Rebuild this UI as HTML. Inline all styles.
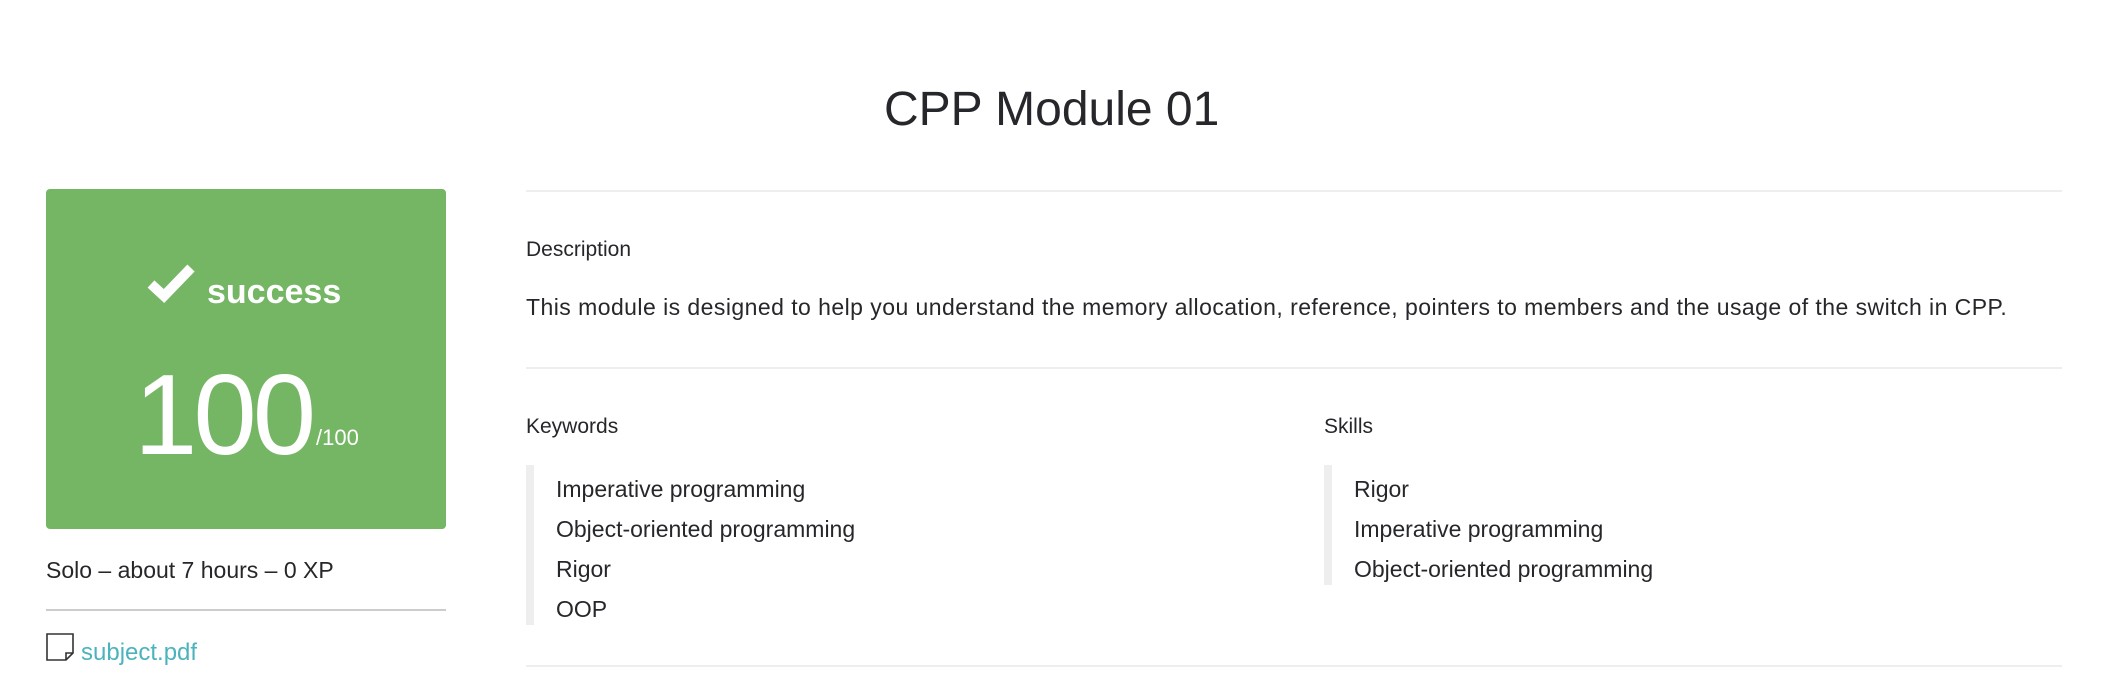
<!DOCTYPE html>
<html><head><meta charset="utf-8"><style>
*{margin:0;padding:0;box-sizing:border-box}
body{width:2106px;height:688px;background:#fff;font-family:"Liberation Sans",sans-serif;color:#26272b;position:relative;overflow:hidden}
.a{position:absolute;white-space:nowrap}
.hr{position:absolute;height:2px;background:#eee;left:526px;width:1536px}
.bar{position:absolute;width:8px;background:#eee}
</style></head><body>
<div class="a" style="left:884px;top:82px;font-size:48px;">CPP Module 01</div>

<div class="a" style="left:46px;top:189px;width:400px;height:340px;background:#75b665;border-radius:4px;"></div>
<svg class="a" style="left:147px;top:262px" width="50" height="42" viewBox="0 0 50 42"><path d="M4 22 L17 34 L44 6" fill="none" stroke="#fff" stroke-width="10"/></svg>
<div class="a" style="left:207px;top:273px;font-size:34px;color:#fff;font-weight:bold">success</div>
<div class="a" style="left:134px;top:350px;font-size:114px;color:#fff;letter-spacing:-4px">100</div>
<div class="a" style="left:316px;top:425px;font-size:22px;color:#fff">/100</div>
<div class="a" style="left:46px;top:557px;font-size:23px">Solo – about 7 hours – 0 XP</div>
<div class="a" style="left:46px;top:609px;width:400px;height:2px;background:#ccc"></div>
<svg class="a" style="left:46px;top:633px" width="30" height="30" viewBox="0 0 30 30"><path d="M1 1 H27 V20 L20 27 H1 Z M20 27 V20 H27" fill="none" stroke="#333" stroke-width="1.6"/></svg>
<div class="a" style="left:81px;top:639px;font-size:24px;color:#4cb3bd">subject.pdf</div>

<div class="hr" style="top:190px"></div>
<div class="a" style="left:526px;top:238px;font-size:21px">Description</div>
<div class="a" style="left:526px;top:294px;font-size:23px;letter-spacing:0.45px">This module is designed to help you understand the memory allocation, reference, pointers to members and the usage of the switch in CPP.</div>
<div class="hr" style="top:367px"></div>

<div class="a" style="left:526px;top:415px;font-size:21px">Keywords</div>
<div class="bar" style="left:526px;top:465px;height:160px"></div>
<div class="a" style="left:556px;top:469px;font-size:23px;line-height:40px">Imperative programming<br>Object-oriented programming<br>Rigor<br>OOP</div>

<div class="a" style="left:1324px;top:415px;font-size:21px">Skills</div>
<div class="bar" style="left:1324px;top:465px;height:120px"></div>
<div class="a" style="left:1354px;top:469px;font-size:23px;line-height:40px">Rigor<br>Imperative programming<br>Object-oriented programming</div>

<div class="hr" style="top:665px"></div>
</body></html>
